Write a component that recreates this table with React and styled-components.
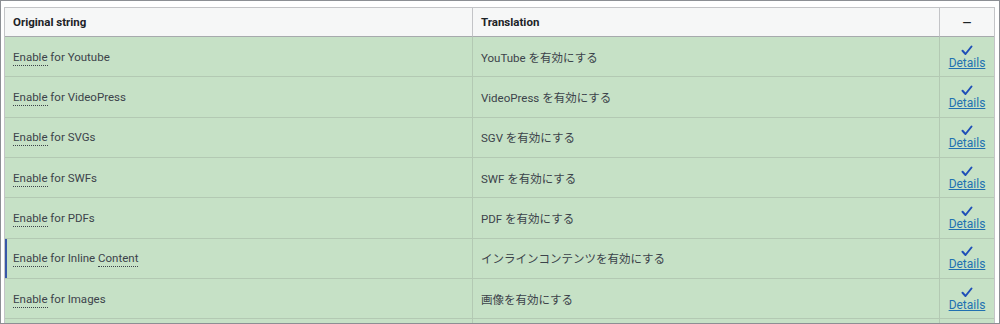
import React from 'react';
import styled, {createGlobalStyle} from 'styled-components';

const GlobalStyle = createGlobalStyle`
  html, body {
    margin: 0;
    padding: 0;
    background: #ffffff;
  }
  body {
    font-family: Roboto, "Noto Sans CJK JP", sans-serif;
    font-size: 11.5px;
    color: #3c434a;
  }
`;

const Frame = styled.div`
  box-sizing: border-box;
  width: 1000px;
  height: 324px;
  border: 1px solid #8c8f94;
  padding: 6px 4px 0 3px;
  overflow: hidden;
  background: #fff;
`;

const Table = styled.div`
  display: grid;
  grid-template-columns: 467px 467px 1fr;
  grid-auto-rows: 40.33px;
  grid-template-rows: 29px;
  border-left: 1px solid #c3c4c7;
  border-right: 1px solid #c3c4c7;
  border-top: 1px solid #c3c4c7;
`;

const HeadCell = styled.div`
  box-sizing: border-box;
  display: flex;
  align-items: center;
  justify-content: ${p => (p.$center ? 'center' : 'flex-start')};
  padding: 0 8px;
  background: #f6f7f7;
  font-weight: 700;
  color: #1d2327;
  border-bottom: 1px solid #a7aaad;
  border-left: ${p => (p.$first ? 'none' : '1px solid #c3c4c7')};
`;

const Cell = styled.div`
  box-sizing: border-box;
  display: flex;
  align-items: center;
  padding: 0 8px;
  background: #c6e1c6;
  border-bottom: 1px solid #b3c9b3;
  border-left: ${p => (p.$first ? 'none' : '1px solid #b3c9b3')};
  box-shadow: ${p => (p.$marked ? 'inset 2px 0 0 #3858a8' : 'none')};
`;

const ActionCell = styled(Cell)`
  flex-direction: column;
  justify-content: center;
  align-items: center;
  padding: 2px 0 0;
  font-size: 12px;
`;

const Gloss = styled.span`
  border-bottom: 1px dotted #3c434a;
  padding-bottom: 1px;
`;

const Plain = styled.span`
  white-space: pre;
`;

const DetailsLink = styled.a`
  color: #2271b1;
  text-decoration: underline;
  line-height: 15px;
  cursor: pointer;
`;

const Check = () => (
  <svg width="12" height="11" viewBox="0 0 12 11">
    <path d="M1.5 5.8 L4.5 9 L10.5 1.5" fill="none" stroke="#1f4fb8" strokeWidth="2" strokeLinecap="round" strokeLinejoin="round" />
  </svg>
);

const rows = [
  {orig: [['Enable', true], [' for Youtube']], tr: 'YouTube を有効にする'},
  {orig: [['Enable', true], [' for VideoPress']], tr: 'VideoPress を有効にする'},
  {orig: [['Enable', true], [' for SVGs']], tr: 'SGV を有効にする'},
  {orig: [['Enable', true], [' for SWFs']], tr: 'SWF を有効にする'},
  {orig: [['Enable', true], [' for PDFs']], tr: 'PDF を有効にする'},
  {orig: [['Enable', true], [' for Inline '], ['Content', true]], tr: 'インラインコンテンツを有効にする', marked: true},
  {orig: [['Enable', true], [' for Images']], tr: '画像を有効にする'},
];

const App = () => (
  <>
    <GlobalStyle/>
    <Frame>
      <Table>
        <HeadCell $first>Original string</HeadCell>
        <HeadCell>Translation</HeadCell>
        <HeadCell $center>—</HeadCell>
        {rows.map((r, i) => (
          <React.Fragment key={i}>
            <Cell $first $marked={r.marked}>
              <span>
                {r.orig.map(([t, g], j) => (g ? <Gloss key={j}>{t}</Gloss> : <Plain key={j}>{t}</Plain>))}
              </span>
            </Cell>
            <Cell>{r.tr}</Cell>
            <ActionCell>
              <Check/>
              <DetailsLink>Details</DetailsLink>
            </ActionCell>
          </React.Fragment>
        ))}
        {/* next row, cut off by the frame */}
        <Cell $first/>
        <Cell/>
        <Cell/>
      </Table>
    </Frame>
  </>
);

export default App;
